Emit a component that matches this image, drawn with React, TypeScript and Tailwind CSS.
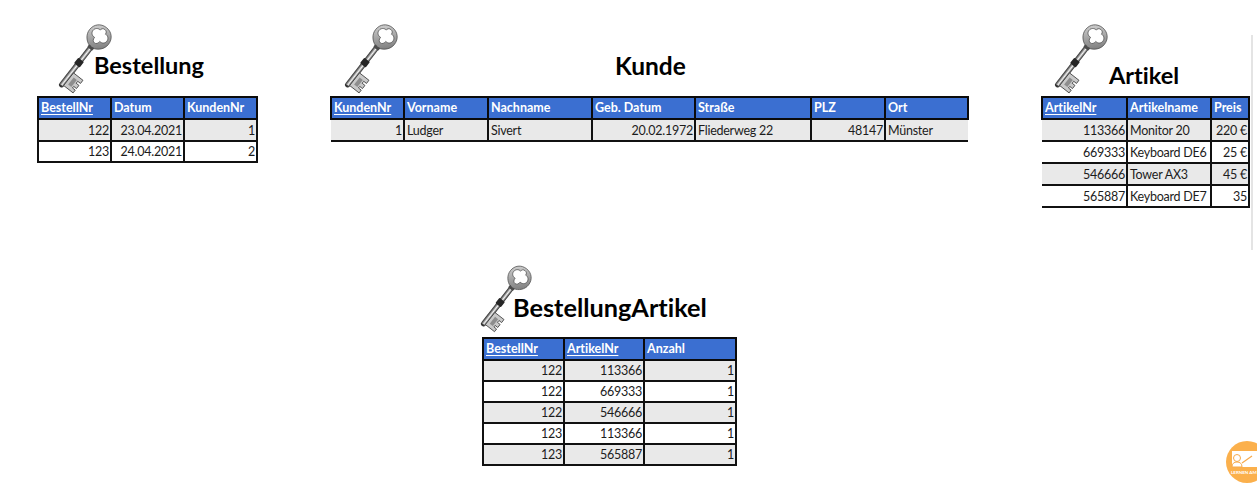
const font = "[font-family:Lato,'Open_Sans',sans-serif] [font-variant-ligatures:none]";

function Key({ className }: { className: string }) {
  return (
    <svg viewBox="0 0 54 70" className={`shrink-0 overflow-visible ${className}`}>
      <defs>
        <linearGradient id="steel" x1="0" x2="1" y1="0" y2="0">
          <stop offset="0" stopColor="#222" />
          <stop offset="0.3" stopColor="#8e8e8e" />
          <stop offset="0.55" stopColor="#f4f4f4" />
          <stop offset="0.8" stopColor="#777" />
          <stop offset="1" stopColor="#1d1d1d" />
        </linearGradient>
        <linearGradient id="ring" x1="0" x2="1" y1="0" y2="1">
          <stop offset="0" stopColor="#dcdcdc" />
          <stop offset="0.5" stopColor="#a4a4a4" />
          <stop offset="1" stopColor="#707070" />
        </linearGradient>
      </defs>
      <g transform="translate(42 12) rotate(38)">
        <path
          fillRule="evenodd"
          fill="url(#ring)"
          stroke="#4a4a4a"
          strokeWidth="0.7"
          d="M0 -12C7 -12 12 -7 12 0C12 6.500 7 11 2.500 12.500L-2.500 12.500C-7 11 -12 6.500 -12 0C-12 -7 -7 -12 0 -12ZM0 -9.500C-2.400 -9.500 -3.500 -7.800 -3.300 -6.200C-6.200 -6.800 -8.800 -4.500 -8.800 -1.500C-8.800 1.500 -6.200 3.500 -3.300 3C-3.500 5.800 -1.800 7.500 0 7.500C1.800 7.500 3.500 5.800 3.300 3C6.200 3.500 8.800 1.500 8.800 -1.500C8.800 -4.500 6.200 -6.800 3.300 -6.200C3.500 -7.800 2.400 -9.500 0 -9.500Z"
        />
        <rect x="-2.700" y="12" width="5.400" height="49" fill="url(#steel)" />
        <rect x="-3.600" y="29" width="7.200" height="7" rx="1" fill="#262626" />
        <rect x="-3.200" y="12" width="6.400" height="3" rx="1" fill="#4c4c4c" />
        <path
          d="M2 44H14V48H10.500V50.500H14V54.500H10.500V56.500H14V60H2Z"
          fill="#c9c9c9"
          stroke="#3c3c3c"
          strokeWidth="0.8"
        />
        <path d="M5 47.500H9V56.500H5Z" fill="#8d8d8d" />
        <path d="M-2.700 61C-2.700 64 2.700 64 2.700 61Z" fill="#333" />
      </g>
    </svg>
  );
}

type Column = { label: string; width: number; keyCol?: boolean; align?: "left" | "right" };

function DataTable({
  columns,
  rows,
  boxLeft,
  boxRight,
  rowClass,
  className,
}: {
  columns: Column[];
  rows: string[][];
  boxLeft?: boolean;
  boxRight?: boolean;
  rowClass: string;
  className: string;
}) {
  return (
    <table className={`table-fixed border-collapse text-[12.500px] leading-none tracking-[-0.25px] whitespace-nowrap text-[#1c1c1c] ${className}`}>
      <colgroup>
        {columns.map((c) => (
          <col key={c.label} style={{ width: c.width }} />
        ))}
      </colgroup>
      <thead>
        <tr className="h-[22px]">
          {columns.map((c) => (
            <th
              key={c.label}
              className="border-2 border-[#0b0b0b] bg-[#3b6fd1] px-[2px] text-left text-[12.500px] font-bold tracking-normal text-white"
            >
              <span className={c.keyCol ? "underline underline-offset-2" : ""}>{c.label}</span>
            </th>
          ))}
        </tr>
      </thead>
      <tbody>
        {rows.map((row, i) => (
          <tr key={i} className={`${rowClass} ${i % 2 === 0 ? "bg-[#e9e9e9]" : "bg-white"}`}>
            {row.map((cell, j) => {
              const first = j === 0;
              const last = j === row.length - 1;
              return (
                <td
                  key={j}
                  className={`border-y-2 border-y-[#111] pt-[2px] ${
                    first && !boxLeft ? "border-l-0" : "border-l-2 border-l-[#111]"
                  } ${last && !boxRight ? "border-r-0" : "border-r-2 border-r-[#111]"} ${
                    columns[j].align === "left" ? "pl-[2px] text-left" : "pr-[1px] text-right"
                  }`}
                >
                  {cell}
                </td>
              );
            })}
          </tr>
        ))}
      </tbody>
    </table>
  );
}

function Logo() {
  return (
    <svg viewBox="0 0 42 42" className="absolute left-[1226px] top-[441px] h-[42px] w-[42px]">
      <circle cx="21" cy="21" r="21" fill="#fbb04c" />
      <rect x="6" y="10" width="32" height="16" fill="#fff" />
      <circle cx="11" cy="17" r="3.500" fill="#fff" stroke="#f6a94a" strokeWidth="1" />
      <path d="M6 26C6 22.500 8 21 11 21C14 21 16 22.500 16 26Z" fill="#fff" stroke="#f6a94a" strokeWidth="1" />
      <path d="M16 22L26 15" stroke="#f6a94a" strokeWidth="1.200" />
      <text x="5" y="33" fontSize="4.500" fontWeight="700" fill="#fff" fontFamily="Lato, sans-serif">
        LERNEN AM
      </text>
    </svg>
  );
}

export default function App() {
  const l = "left" as const;
  return (
    <div className={`relative h-[485px] w-[1257px] overflow-hidden bg-white ${font}`}>
      <div className="flex h-[265px] items-start pt-[25px]">
        <section className="ml-[37px] w-[219px]">
          <div className="flex h-[71px] items-start">
            <Key className="ml-[20px] h-[70px] w-[54px]" />
            <h2 className="mt-[29px] -ml-[17px] text-[23.500px] leading-none font-bold text-black">Bestellung</h2>
          </div>
          <DataTable
            className="w-[219px]"
            rowClass="h-[21.500px]"
            boxLeft
            boxRight
            columns={[
              { label: "BestellNr", width: 73, keyCol: true },
              { label: "Datum", width: 73 },
              { label: "KundenNr", width: 73 },
            ]}
            rows={[
              ["122", "23.04.2021", "1"],
              ["123", "24.04.2021", "2"],
            ]}
          />
        </section>

        <section className="ml-[74px] w-[637px]">
          <div className="flex h-[71px] items-start">
            <Key className="ml-[13px] h-[70px] w-[54px]" />
            <h2 className="mt-[29px] ml-[218px] text-[24.500px] leading-none font-bold text-black">Kunde</h2>
          </div>
          <DataTable
            className="w-[637px]"
            rowClass="h-[21.500px]"
            columns={[
              { label: "KundenNr", width: 73, keyCol: true },
              { label: "Vorname", width: 84, align: l },
              { label: "Nachname", width: 104, align: l },
              { label: "Geb. Datum", width: 103 },
              { label: "Straße", width: 116, align: l },
              { label: "PLZ", width: 74 },
              { label: "Ort", width: 83, align: l },
            ]}
            rows={[["1", "Ludger", "Sivert", "20.02.1972", "Fliederweg 22", "48147", "Münster"]]}
          />
        </section>

        <section className="ml-[74px] w-[207px]">
          <div className="flex h-[71px] items-start">
            <Key className="ml-[12px] h-[70px] w-[54px]" />
            <h2 className="mt-[39px] ml-[2px] text-[23.500px] leading-none font-bold text-black">Artikel</h2>
          </div>
          <DataTable
            className="w-[207px]"
            rowClass="h-[22px]"
            boxRight
            columns={[
              { label: "ArtikelNr", width: 85, keyCol: true },
              { label: "Artikelname", width: 84, align: l },
              { label: "Preis", width: 38 },
            ]}
            rows={[
              ["113366", "Monitor 20", "220 €"],
              ["669333", "Keyboard DE6", "25 €"],
              ["546666", "Tower AX3", "45 €"],
              ["565887", "Keyboard DE7", "35"],
            ]}
          />
        </section>
      </div>

      <section className="ml-[482px] w-[253px]">
        <div className="flex h-[72px] items-start">
          <Key className="-ml-[3px] mt-[1px] h-[68px] w-[52px]" />
          <h2 className="mt-[30px] -ml-[18px] text-[25.300px] leading-none font-bold whitespace-nowrap text-black">
            BestellungArtikel
          </h2>
        </div>
        <DataTable
          className="w-[253px]"
          rowClass="h-[21px]"
          boxLeft
          boxRight
          columns={[
            { label: "BestellNr", width: 81, keyCol: true },
            { label: "ArtikelNr", width: 80, keyCol: true },
            { label: "Anzahl", width: 92 },
          ]}
          rows={[
            ["122", "113366", "1"],
            ["122", "669333", "1"],
            ["122", "546666", "1"],
            ["123", "113366", "1"],
            ["123", "565887", "1"],
          ]}
        />
      </section>

      <div className="absolute left-[1251px] top-[35px] h-[215px] w-[2px] bg-[#e4e4e4]" />
      <Logo />
    </div>
  );
}
